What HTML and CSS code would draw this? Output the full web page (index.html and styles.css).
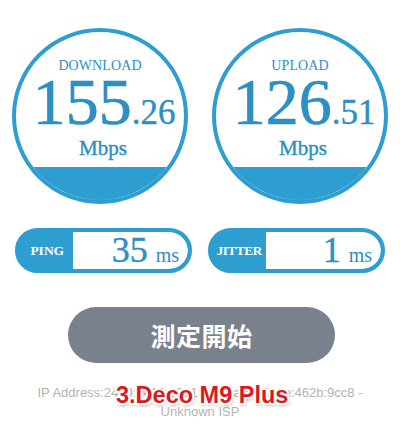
FILE: index.html
```html
<!DOCTYPE html>
<html lang="ja">
<head>
<meta charset="utf-8">
<link rel="stylesheet" href="styles.css">
</head>
<body>
<div class="page">
  <div class="gauges">
    <div class="gauge">
      <div class="g-label">DOWNLOAD</div>
      <div class="g-value">155<span class="g-dec">.26</span></div>
      <div class="g-unit">Mbps</div>
      <div class="g-fill"></div>
    </div>
    <div class="gauge">
      <div class="g-label">UPLOAD</div>
      <div class="g-value">126<span class="g-dec">.51</span></div>
      <div class="g-unit">Mbps</div>
      <div class="g-fill"></div>
    </div>
  </div>
  <div class="pills">
    <div class="pill">
      <div class="p-label">PING</div>
      <div class="p-value"><span class="p-num">35</span><span class="p-unit">ms</span></div>
    </div>
    <div class="pill">
      <div class="p-label p-label-narrow">JITTER</div>
      <div class="p-value"><span class="p-num">1</span><span class="p-unit">ms</span></div>
    </div>
  </div>
  <div class="btn-row">
    <div class="start-btn">測定開始</div>
  </div>
  <div class="info">
    <div class="ip">IP Address:2400:2410:3021:4d00:a5f3:1c2e:462b:9cc8 -</div>
    <div class="ip">Unknown ISP</div>
    <div class="caption">3.Deco M9 Plus</div>
  </div>
</div>
</body>
</html>
```

FILE: styles.css
```css
html, body {
  margin: 0;
  padding: 0;
  background: #ffffff;
}

.page {
  width: 400px;
  height: 430px;
  overflow: hidden;
  font-family: "Liberation Serif", "Times New Roman", serif;
}

.gauges {
  display: flex;
  justify-content: space-around;
  padding-top: 28px;
}

.gauge {
  width: 176px;
  height: 176px;
  box-sizing: border-box;
  border: 4.5px solid #2e9dd0;
  border-radius: 50%;
  overflow: hidden;
  display: flex;
  flex-direction: column;
  align-items: center;
  padding-top: 26px;
  color: #2d8fc2;
}

.g-label {
  font-size: 14px;
  line-height: 16px;
  letter-spacing: 0.1px;
}

.g-value {
  font-size: 66px;
  line-height: 50px;
  margin-top: 3px;
  padding-left: 8px;
  white-space: nowrap;
  -webkit-text-stroke: 0.7px #2d8fc2;
}

.g-dec {
  font-size: 35px;
  line-height: 1;
  -webkit-text-stroke: 0.4px #2d8fc2;
}

.g-unit {
  font-size: 21px;
  line-height: 22px;
  margin-top: 6.5px;
  padding-left: 6px;
  -webkit-text-stroke: 0.4px #2d8fc2;
}

.g-fill {
  margin-top: auto;
  align-self: stretch;
  height: 33px;
  background: #2e9dd0;
}

.pills {
  display: flex;
  gap: 16px;
  padding-left: 15px;
  margin-top: 24px;
}

.pill {
  width: 177px;
  height: 45px;
  box-sizing: border-box;
  border: 4.5px solid #2e9dd0;
  border-radius: 23px;
  background: #2e9dd0;
  overflow: hidden;
  display: flex;
}

.p-label {
  width: 53.5px;
  flex: none;
  display: flex;
  align-items: center;
  justify-content: center;
  padding-left: 3px;
  box-sizing: border-box;
  color: #ffffff;
  font-weight: bold;
  font-size: 13.5px;
  padding-top: 1px;
}

.p-label-narrow {
  font-size: 13px;
  letter-spacing: -0.3px;
  padding-left: 1px;
}

.p-value {
  flex: 1;
  background: #ffffff;
  border-radius: 0 20px 20px 0;
  display: flex;
  align-items: baseline;
  justify-content: flex-end;
  line-height: 36px;
  padding-right: 9px;
  color: #2d8fc2;
}

.p-num {
  font-size: 36px;
  -webkit-text-stroke: 0.4px #2d8fc2;
}

.p-unit {
  font-size: 20px;
  margin-left: 8px;
}

.btn-row {
  margin-top: 34px;
  padding-left: 68px;
}

.start-btn {
  width: 267px;
  height: 56px;
  border-radius: 28px;
  background: #79818d;
  color: #ffffff;
  display: flex;
  align-items: center;
  justify-content: center;
  font-family: "Noto Sans CJK JP", "Noto Sans", sans-serif;
  font-weight: bold;
  font-size: 25px;
  letter-spacing: 0.5px;
}

.info {
  position: relative;
  margin-top: 20px;
  text-align: center;
}

.ip {
  font-family: "Liberation Sans", Arial, sans-serif;
  font-size: 13px;
  line-height: 19px;
  color: #b3b3b3;
}

.caption {
  position: absolute;
  left: 116px;
  top: 0;
  font-family: "Liberation Sans", Arial, sans-serif;
  font-weight: bold;
  font-size: 23.5px;
  line-height: 24px;
  color: #dc1a1e;
  white-space: nowrap;
  text-shadow:
    -1.5px -1.5px 0 #fff, 1.5px -1.5px 0 #fff, -1.5px 1.5px 0 #fff, 1.5px 1.5px 0 #fff,
    0 -2px 0 #fff, 0 2px 0 #fff, -2px 0 0 #fff, 2px 0 0 #fff,
    1px 2px 4px rgba(0, 0, 0, 0.45);
}
```
